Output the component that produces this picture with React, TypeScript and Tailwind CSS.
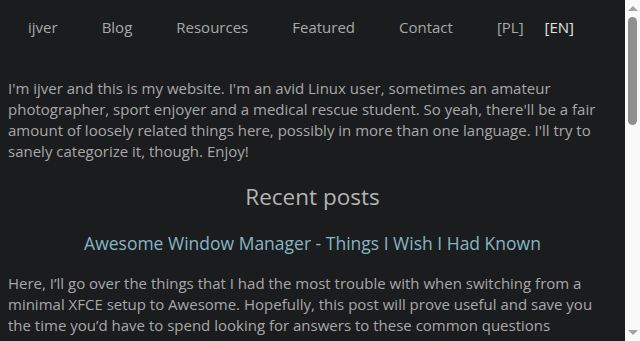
const font = { fontFamily: '"Open Sans", "Noto Sans", sans-serif' }

const navItems = ['ijver', 'Blog', 'Resources', 'Featured', 'Contact']

const posts = [
  {
    title: 'Awesome Window Manager - Things I Wish I Had Known',
    excerpt:
      'Here, I’ll go over the things that I had the most trouble with when switching from a minimal XFCE setup to Awesome. Hopefully, this post will prove useful and save you the time you’d have to spend looking for answers to these common questions regarding configuration, widgets and keybindings.',
  },
  {
    title: 'Setting Up a Photography Workflow on Linux',
    excerpt:
      'A short overview of the tools I use for importing, sorting and editing my photos, from darktable to a couple of small shell scripts that keep everything in order.',
  },
]

function Nav() {
  return (
    <header className="flex h-[55px] shrink-0 items-center pl-[6px] text-[15px] text-[#a8a8a8]">
      {navItems.map((item) => (
        <a key={item} className="px-[22px]">
          {item}
        </a>
      ))}
      <a className="pl-[22px]">[PL]</a>
      <a className="pl-[21px] text-[#e2e2e2]">[EN]</a>
    </header>
  )
}

function Scrollbar() {
  return (
    <div className="flex w-[15px] shrink-0 flex-col items-center bg-[#f9f9f9]">
      <div className="mt-[6px] h-0 w-0 border-x-[5px] border-b-[5px] border-x-transparent border-b-[#a3a3a3]" />
      <div className="mt-[6px] h-[108px] w-[9px] rounded-full bg-[#8f8f8f]" />
      <div className="flex-1" />
      <div className="mb-[6px] h-0 w-0 border-x-[5px] border-t-[5px] border-x-transparent border-t-[#a3a3a3]" />
    </div>
  )
}

export default function App() {
  return (
    <div className="flex h-screen overflow-hidden bg-[#1b1c1e]" style={font}>
      <div className="flex min-w-0 flex-1 flex-col overflow-hidden">
        <Nav />
        <main className="px-2 text-[15px] leading-[21px] text-[#a8a8a8]">
          <p className="mt-[23px]">
            I'm ijver and this is my website. I'm an avid Linux user, sometimes an amateur
            photographer, sport enjoyer and a medical rescue student. So yeah, there'll be a fair
            amount of loosely related things here, possibly in more than one language. I'll try to
            sanely categorize it, though. Enjoy!
          </p>
          <h2 className="mt-[19px] text-center text-[22.5px] leading-[32px] text-[#b4b4b4]">
            Recent posts
          </h2>
          {posts.map((post) => (
            <article key={post.title} className="mt-[17px]">
              <h3 className="text-center text-[17.5px] leading-[26px] text-[#86b6c2]">
                <a>{post.title}</a>
              </h3>
              <p className="mt-[17px]">{post.excerpt}</p>
            </article>
          ))}
        </main>
      </div>
      <Scrollbar />
    </div>
  )
}
